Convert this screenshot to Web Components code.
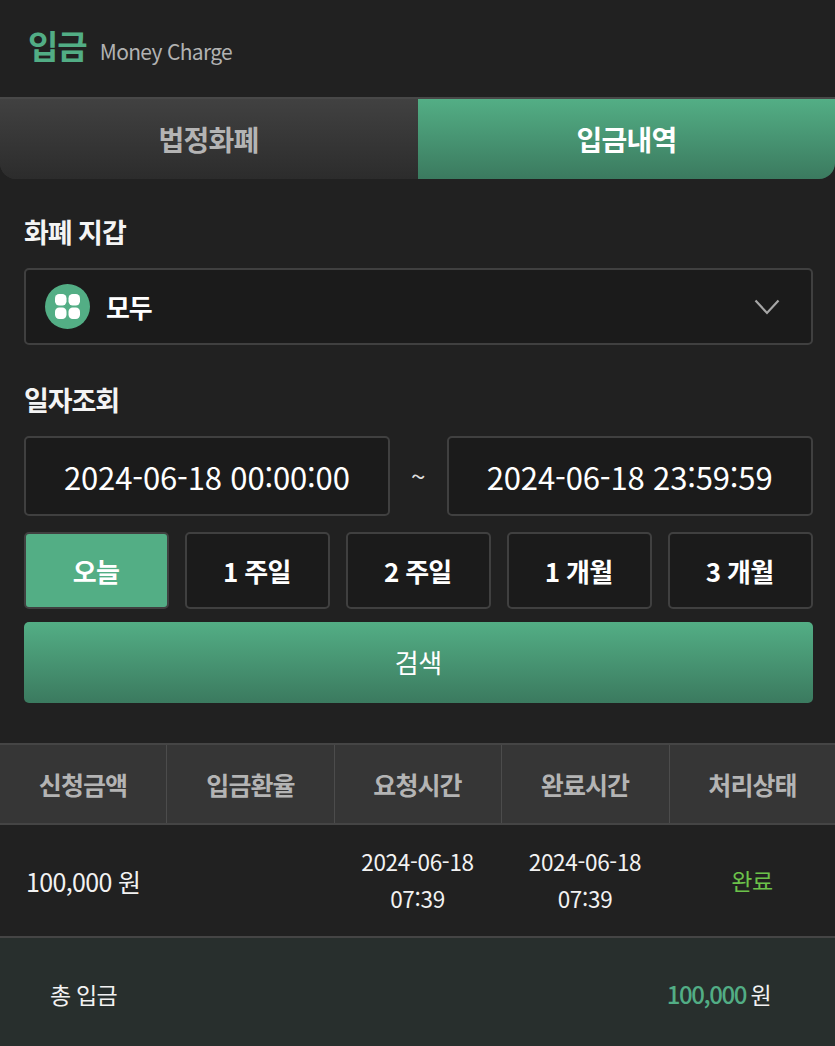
<!DOCTYPE html>
<html lang="ko"><head><meta charset="utf-8">
<style>
html,body{margin:0;padding:0;background:#212121}
body{width:835px;height:1046px;overflow:hidden;font-family:"Noto Sans CJK KR","Noto Sans",sans-serif;color:#fff}
</style></head><body>
<money-page></money-page>
<script>
function def(name,css,html){
  customElements.define(name,class extends HTMLElement{
    constructor(){super();const s=this.attachShadow({mode:'open'});s.innerHTML='<style>'+css+'</style>'+html;}
  });
}
const B='2px solid #404040';
def('page-header',`:host{display:flex;align-items:center;height:97px;box-sizing:border-box;padding-left:28px;gap:13px;background:#212121}
.t{font-size:33px;font-weight:700;color:#52ad85;line-height:1;letter-spacing:-1px;margin-top:-6px}
.s{font-size:21px;color:#b2b2b2;line-height:1;letter-spacing:-.66px;margin-top:6px}`,
`<span class="t">입금</span><span class="s">Money Charge</span>`);
def('tab-bar',`:host{display:flex;height:82px;box-sizing:border-box;border-top:2px solid #484848;border-radius:0 0 16px 16px;overflow:hidden;background:#2f2f2f}
.tab{flex:0 0 418px;display:flex;align-items:center;justify-content:center;font-size:28px;font-weight:700;letter-spacing:-.75px;color:#b4b4b4;background:linear-gradient(#414141,#2c2c2c);padding-right:1px;box-sizing:border-box}
.tab.on{flex:1;color:#fff;background:linear-gradient(#53ae85,#3b7a5f);padding:0}`,
`<div class="tab">법정화폐</div><div class="tab on">입금내역</div>`);
def('section-label',`:host{display:block;font-size:27px;font-weight:700;line-height:36px;letter-spacing:-1.05px;color:#f4f4f4}`,`<slot></slot>`);
def('wallet-select',`:host{display:flex;align-items:center;height:77px;box-sizing:border-box;border:${B};border-radius:5px;background:#1b1b1b;padding:0 31px 0 19px}
svg{display:block;flex:none}
.l{flex:1;margin-left:16px;font-size:26px;font-weight:700;letter-spacing:-1.2px;color:#fff;line-height:1}`,
`<svg width="45" height="45" viewBox="0 0 45 45"><circle cx="22.5" cy="22.5" r="22.5" fill="#53ae85"/><g fill="#fff"><rect x="10" y="10" width="11.5" height="11.5" rx="4.2"/><rect x="23.5" y="10" width="11.5" height="11.5" rx="4.2"/><rect x="10" y="23.5" width="11.5" height="11.5" rx="4.2"/><rect x="23.5" y="23.5" width="11.5" height="11.5" rx="4.2"/></g></svg>
<span class="l">모두</span>
<svg width="26" height="16" viewBox="0 0 26 16"><path d="M1.5 1.5 13 14 24.5 1.5" fill="none" stroke="#a6a6a6" stroke-width="2.2"/></svg>`);
def('date-field',`:host{display:flex;align-items:center;justify-content:center;flex:1 1 0;height:80px;box-sizing:border-box;border:${B};border-radius:5px;background:#1b1b1b;font-size:31px;letter-spacing:-.14px;color:#fff;line-height:1}`,`<slot></slot>`);
def('date-range',`:host{display:flex;align-items:center;gap:0}
.t{flex:0 0 57px;text-align:center;font-size:26px;color:#ddd;line-height:1}`,
`<date-field>2024-06-18 00:00:00</date-field><span class="t">~</span><date-field>2024-06-18 23:59:59</date-field>`);
def('period-button',`:host{display:flex;align-items:center;justify-content:center;flex:1 1 0;height:77px;box-sizing:border-box;border:${B};border-radius:5px;background:#1b1b1b;font-size:26px;font-weight:700;letter-spacing:-.7px;color:#fff;line-height:1;padding-right:1px}
:host([on]){background:#53ae85}`,`<slot></slot>`);
def('period-row',`:host{display:flex;gap:16px}`,
`<period-button on>오늘</period-button><period-button>1 주일</period-button><period-button>2 주일</period-button><period-button>1 개월</period-button><period-button>3 개월</period-button>`);
def('search-button',`:host{display:flex;align-items:center;justify-content:center;height:81px;box-sizing:border-box;padding-bottom:2px;border-radius:5px;background:linear-gradient(#53ae85,#3b7a5f);font-size:26px;font-weight:400;color:#fff;line-height:1;letter-spacing:-.3px}`,`<slot></slot>`);
const cols='166px 168px 167px 168px 1fr';
def('history-table',`:host{display:block}
.h{display:grid;grid-template-columns:${cols};height:82px;box-sizing:border-box;border-top:2px solid #454545;border-bottom:2px solid #454545;background:#363636}
.h div{display:flex;align-items:center;justify-content:center;font-size:25px;font-weight:700;letter-spacing:-.9px;color:#b4b4b4;border-left:1px solid #4c4c4c;line-height:1}
.h div:first-child{border-left:0}
.h .n{padding-right:1px}
.r{display:grid;grid-template-columns:${cols};height:113px;align-items:center;font-size:22.5px;letter-spacing:-.3px;color:#f2f2f2;background:#212121;border-bottom:2px solid #454545;box-sizing:border-box;padding-bottom:2px}
.r div{text-align:center;line-height:36.5px}
.r .a{text-align:left;padding:4px 0 0 26px;font-size:25px;letter-spacing:-.65px}
.r .ok{color:#6cc24a;font-size:23px;letter-spacing:-.4px;padding-top:2px}`,
`<div class="h"><div>신청금액</div><div>입금환율</div><div class="n">요청시간</div><div class="n">완료시간</div><div>처리상태</div></div>
<div class="r"><div class="a">100,000 원</div><div></div><div>2024-06-18<br>07:39</div><div>2024-06-18<br>07:39</div><div class="ok">완료</div></div>`);
def('total-bar',`:host{display:flex;align-items:center;justify-content:space-between;height:109px;box-sizing:border-box;padding:3px 64px 0 50px;background:#282f2d;font-size:23px;color:#f2f2f2;line-height:1;letter-spacing:-.75px}
b{font-weight:500;color:#52ad85;font-size:24px;letter-spacing:-1.45px;margin-right:-1px}`,
`<span>총 입금</span><span><b>100,000</b> 원</span>`);
def('money-page',`:host{display:block;width:835px;height:1046px;overflow:hidden;background:#212121}
.form{padding:0 22.5px 0 24px;display:flex;flex-direction:column}
section-label.a{margin-top:35px}
wallet-select{margin-top:18px}
section-label.b{margin-top:37px}
date-range{margin-top:18px}
period-row{margin-top:16px}
search-button{margin-top:13px}
history-table{margin-top:40px}`,
`<page-header></page-header><tab-bar></tab-bar>
<div class="form"><section-label class="a">화폐 지갑</section-label><wallet-select></wallet-select>
<section-label class="b">일자조회</section-label><date-range></date-range><period-row></period-row><search-button>검색</search-button></div>
<history-table></history-table><total-bar></total-bar>`);
</script>
</body></html>
